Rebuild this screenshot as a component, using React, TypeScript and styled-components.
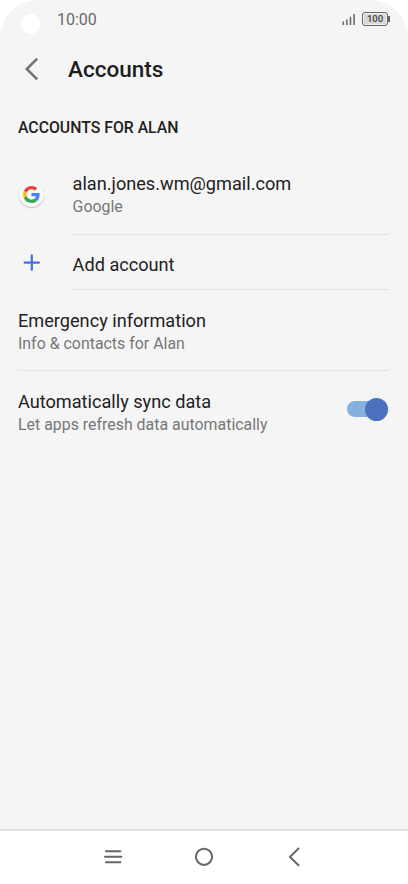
import React from 'react';
import styled, { createGlobalStyle } from 'styled-components';

const GlobalStyle = createGlobalStyle`
  * { box-sizing: border-box; }
  body { margin: 0; background: #fff; font-family: Roboto, "Noto Sans", sans-serif; }
  svg { display: block; flex: none; }
`;

const Screen = styled.div`
  width: 408px;
  height: 884px;
  display: flex;
  flex-direction: column;
  background: #f5f5f5;
  border-radius: 38px 38px 0 0;
  overflow: hidden;
`;

const StatusBar = styled.header`
  height: 38px;
  display: flex;
  align-items: center;
  padding: 0 18.5px 0 21px;
`;

const Camera = styled.span`
  width: 20px;
  height: 20px;
  margin: 9px 16px 0 0;
  border-radius: 50%;
  background: #fff;
`;

const Clock = styled.span`
  flex: 1;
  padding-top: 1px;
  font-size: 16px;
  line-height: 20px;
  color: #6a6a6a;
`;

const AppBar = styled.div`
  height: 62px;
  display: flex;
  align-items: center;
  gap: 29px;
  padding-left: 24px;
`;

const Title = styled.h1`
  margin: 0;
  font-size: 22.5px;
  line-height: 28px;
  font-weight: 500;
  color: #1d1d1d;
`;

const SectionTitle = styled.h2`
  margin: 0;
  height: 54px;
  padding: 1px 0 0 18px;
  font-size: 15.8px;
  line-height: 54px;
  font-weight: 500;
  color: #222;
`;

const Row = styled.div<{ $height: number }>`
  height: ${(p) => p.$height}px;
  display: flex;
  padding: 0 19px 0 18px;
`;

const IconCell = styled.div<{ $top: number }>`
  width: 54px;
  flex: none;
  padding-top: ${(p) => p.$top}px;
`;

const RowBody = styled.div<{ $line?: boolean; $top?: number }>`
  flex: 1;
  display: flex;
  justify-content: space-between;
  padding-top: ${(p) => p.$top ?? 18}px;
  border-bottom: ${(p) => (p.$line ? '1px solid #e4e4e4' : 'none')};
`;

const Name = styled.div<{ $indent?: boolean }>`
  font-size: 18.15px;
  line-height: 25px;
  padding-left: ${(p) => (p.$indent ? 0.6 : 0)}px;
  color: #222;
  white-space: nowrap;
`;

const Detail = styled(Name)`
  font-size: 15.92px;
  line-height: 22px;
  color: #777;
`;

const Track = styled.div`
  width: 41px;
  height: 16px;
  margin: 12px 1.5px 0 0;
  display: flex;
  align-items: center;
  justify-content: flex-end;
  border-radius: 8px;
  background: #86b1dc;
`;

const Thumb = styled.span`
  width: 23px;
  height: 23px;
  flex: none;
  border-radius: 50%;
  background: #4b71be;
`;

const NavBar = styled.nav`
  height: 55px;
  margin-top: auto;
  padding-bottom: 2px;
  display: flex;
  align-items: center;
  justify-content: center;
  gap: 61px;
  border-top: 2px solid #e0e0e0;
  background: #fff;
`;

const SignalIcon = () => (
  <svg width="15" height="14" viewBox="0 0 15 14" stroke="#6a6a6a" strokeWidth="1.6">
    <path d="M1.3 9.5V13M4.9 7.4V13M8.5 4.8V13M12.1 2V13" />
  </svg>
);

const Battery = styled.span`
  width: 26px;
  height: 14px;
  margin-left: 5px;
  display: flex;
  align-items: center;
  justify-content: center;
  border: 1.5px solid #666;
  border-radius: 3px;
  background: #d8d8d8;
  box-shadow: inset 0 0 0 1px #f2f2f2;
  font-size: 9.5px;
  font-weight: 500;
  line-height: 10px;
  color: #444;
`;

const BatteryTip = styled.span`
  width: 1.5px;
  height: 6px;
  background: #666;
`;

const GoogleBadge = styled.div`
  width: 25px;
  height: 25px;
  margin-left: 1px;
  display: flex;
  align-items: center;
  justify-content: center;
  border-radius: 50%;
  background: #f9f9f9;
  box-shadow: 0 1px 1.5px rgba(0, 0, 0, 0.22);
`;

const GoogleLogo = () => (
  <svg width="17" height="17" viewBox="0 0 48 48">
    <path fill="#EA4335" d="M24 9.5c3.54 0 6.71 1.22 9.21 3.6l6.85-6.85C35.9 2.38 30.47 0 24 0 14.62 0 6.51 5.38 2.56 13.22l7.98 6.19C12.43 13.72 17.74 9.5 24 9.5z" />
    <path fill="#4285F4" d="M46.98 24.55c0-1.57-.15-3.09-.38-4.55H24v9.02h12.94c-.58 2.96-2.26 5.48-4.78 7.18l7.73 6c4.51-4.18 7.09-10.36 7.09-17.65z" />
    <path fill="#FBBC05" d="M10.53 28.59A14.5 14.5 0 0 1 9.77 24c0-1.6.27-3.14.76-4.59l-7.98-6.19A23.9 23.9 0 0 0 0 24c0 3.88.92 7.54 2.56 10.78l7.97-6.19z" />
    <path fill="#34A853" d="M24 48c6.48 0 11.93-2.13 15.89-5.81l-7.73-6c-2.15 1.45-4.92 2.3-8.16 2.3-6.26 0-11.57-4.22-13.47-9.91l-7.98 6.19C6.51 42.62 14.62 48 24 48z" />
  </svg>
);

const BackArrow = () => (
  <svg width="15" height="24" viewBox="0 0 15 24" fill="none" stroke="#757575" strokeWidth="2.6">
    <path d="M13.2 1.6 2.8 12l10.4 10.4" />
  </svg>
);

const PlusIcon = () => (
  <svg width="28" height="18" viewBox="0 0 28 18" stroke="#456fe0" strokeWidth="2.2" strokeLinecap="round">
    <path d="M6.6 9.6h14.4M13.8 2.4v14.4" />
  </svg>
);

const MenuIcon = () => (
  <svg width="30" height="24" viewBox="0 0 30 24" stroke="#666" strokeWidth="2" strokeLinecap="round">
    <path d="M8 6.2h14.4M7 11.8h16.4M8 17.3h14.4" />
  </svg>
);

const HomeIcon = () => (
  <svg width="30" height="24" viewBox="0 0 30 24" fill="none" stroke="#666" strokeWidth="2">
    <circle cx="15" cy="11.8" r="8.1" />
  </svg>
);

const NavBack = () => (
  <svg width="30" height="24" viewBox="0 0 30 24" fill="none" stroke="#666" strokeWidth="2" strokeLinecap="round">
    <path d="M18.5 3.5 10 11.9l8.5 8.4" />
  </svg>
);

export default function App() {
  return (
    <>
      <GlobalStyle />
      <Screen>
        <StatusBar>
          <Camera />
          <Clock>10:00</Clock>
          <SignalIcon />
          <Battery>100</Battery>
          <BatteryTip />
        </StatusBar>
        <AppBar>
          <BackArrow />
          <Title>Accounts</Title>
        </AppBar>
        <SectionTitle>ACCOUNTS FOR ALAN</SectionTitle>
        <main>
          <Row $height={81}>
            <IconCell $top={28}>
              <GoogleBadge><GoogleLogo /></GoogleBadge>
            </IconCell>
            <RowBody $line $top={17}>
              <div>
                <Name $indent>alan.jones.wm@gmail.com</Name>
                <Detail $indent>Google</Detail>
              </div>
            </RowBody>
          </Row>
          <Row $height={55}>
            <IconCell $top={18}><PlusIcon /></IconCell>
            <RowBody $line $top={17}><Name $indent>Add account</Name></RowBody>
          </Row>
          <Row $height={81}>
            <RowBody $line>
              <div>
                <Name>Emergency information</Name>
                <Detail>Info &amp; contacts for Alan</Detail>
              </div>
            </RowBody>
          </Row>
          <Row $height={81}>
            <RowBody>
              <div>
                <Name>Automatically sync data</Name>
                <Detail>Let apps refresh data automatically</Detail>
              </div>
              <Track role="switch" aria-checked="true"><Thumb /></Track>
            </RowBody>
          </Row>
        </main>
        <NavBar>
          <MenuIcon />
          <HomeIcon />
          <NavBack />
        </NavBar>
      </Screen>
    </>
  );
}
